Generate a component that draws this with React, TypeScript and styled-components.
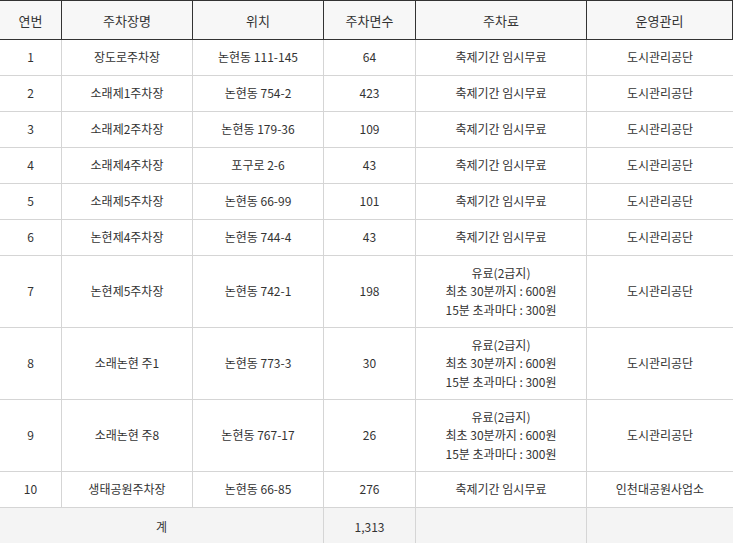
import styled, { createGlobalStyle } from "styled-components";

const GlobalStyle = createGlobalStyle`
    html, body {
        margin: 0;
        padding: 0;
        background: #fff;
    }
    body {
        font-family: "Noto Sans CJK KR", "Noto Sans", sans-serif;
        color: #333;
    }
`;

type Row = {
    no: number;
    name: string;
    place: string;
    count: string;
    fee: string[];
    manager: string;
};

const FREE = ["축제기간 임시무료"];
const PAID = ["유료(2급지)", "최초 30분까지 : 600원", "15분 초과마다 : 300원"];

const rows: Row[] = [
    { no: 1, name: "장도로주차장", place: "논현동 111-145", count: "64", fee: FREE, manager: "도시관리공단" },
    { no: 2, name: "소래제1주차장", place: "논현동 754-2", count: "423", fee: FREE, manager: "도시관리공단" },
    { no: 3, name: "소래제2주차장", place: "논현동 179-36", count: "109", fee: FREE, manager: "도시관리공단" },
    { no: 4, name: "소래제4주차장", place: "포구로 2-6", count: "43", fee: FREE, manager: "도시관리공단" },
    { no: 5, name: "소래제5주차장", place: "논현동 66-99", count: "101", fee: FREE, manager: "도시관리공단" },
    { no: 6, name: "논현제4주차장", place: "논현동 744-4", count: "43", fee: FREE, manager: "도시관리공단" },
    { no: 7, name: "논현제5주차장", place: "논현동 742-1", count: "198", fee: PAID, manager: "도시관리공단" },
    { no: 8, name: "소래논현 주1", place: "논현동 773-3", count: "30", fee: PAID, manager: "도시관리공단" },
    { no: 9, name: "소래논현 주8", place: "논현동 767-17", count: "26", fee: PAID, manager: "도시관리공단" },
    { no: 10, name: "생태공원주차장", place: "논현동 66-85", count: "276", fee: FREE, manager: "인천대공원사업소" },
];

const headers = ["연번", "주차장명", "위치", "주차면수", "주차료", "운영관리"];

function App() {
    return (
        <>
            <GlobalStyle />
            <Table>
                {headers.map((h) => (
                    <HeadCell key={h}>{h}</HeadCell>
                ))}
                {rows.map((r) => {
                    const tall = r.fee.length > 1;
                    return [r.no, r.name, r.place, r.count].map((v, i) => (
                        <Cell key={`${r.no}-${i}`} $tall={tall}>{v}</Cell>
                    )).concat([
                        <Cell key={`${r.no}-fee`} $tall={tall}>
                            {r.fee.map((line) => (
                                <div key={line}>{line}</div>
                            ))}
                        </Cell>,
                        <Cell key={`${r.no}-mg`} $tall={tall}>{r.manager}</Cell>,
                    ]);
                })}
                <TotalCell $span={3}>계</TotalCell>
                <TotalCell>1,313</TotalCell>
                <TotalCell />
                <TotalCell $last />
            </Table>
        </>
    );
}

export default App;

const Table = styled.div`
    display: grid;
    grid-template-columns: 62px 131px 131px 92px 171px 146px;
    width: 733px;
    border-top: 1px solid #333;
    font-size: 12px;
    text-align: center;
`;

const HeadCell = styled.div`
    box-sizing: border-box;
    height: 39px;
    display: flex;
    align-items: center;
    justify-content: center;
    background: #f7f7f7;
    border-right: 1px solid #333;
    border-bottom: 1px solid #333;
    font-size: 13px;
    color: #333;
`;

const Cell = styled.div<{ $tall?: boolean }>`
    box-sizing: border-box;
    height: ${(p) => (p.$tall ? "72px" : "36px")};
    display: flex;
    flex-direction: column;
    align-items: center;
    justify-content: center;
    line-height: 18.5px;
    background: #fff;
    border-bottom: 1px solid #d5d5d5;
    border-right: 1px solid #d5d5d5;

    &:nth-child(6n) {
        border-right: none;
    }
`;

const TotalCell = styled.div<{ $span?: number; $last?: boolean }>`
    box-sizing: border-box;
    grid-column: span ${(p) => p.$span ?? 1};
    height: 36px;
    display: flex;
    align-items: center;
    justify-content: center;
    background: #f4f4f4;
    border-right: ${(p) => (p.$last ? "none" : "1px solid #d5d5d5")};
`;
